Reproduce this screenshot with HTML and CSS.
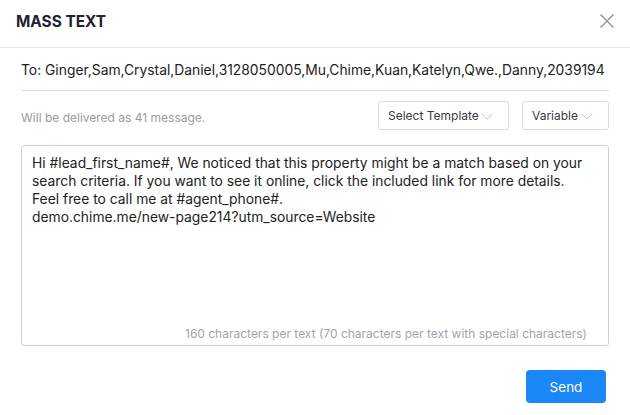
FILE: index.html
```html
<!DOCTYPE html>
<html>
<head>
<meta charset="utf-8">
<link rel="stylesheet" href="styles.css">
</head>
<body>
<div class="modal">
  <div class="header">
    <div class="title">MASS TEXT</div>
    <svg class="close" width="16" height="16" viewBox="0 0 16 16"><path d="M1.5 1.5 L14.5 14.5 M14.5 1.5 L1.5 14.5" stroke="#9a9ba6" stroke-width="1.6" fill="none"/></svg>
  </div>
  <div class="body">
    <div class="to">To: Ginger,Sam,Crystal,Daniel,3128050005,Mu,Chime,Kuan,Katelyn,Qwe.,Danny,2039194</div>
    <div class="toolbar">
      <div class="note">Will be delivered as 41 message.</div>
      <div class="select tpl">Select Template <svg width="12" height="7" viewBox="0 0 12 7"><path d="M1 1 L6 6 L11 1" stroke="#c2c3cb" stroke-width="1" fill="none"/></svg></div>
      <div class="select var">Variable <svg width="12" height="7" viewBox="0 0 12 7"><path d="M1 1 L6 6 L11 1" stroke="#c2c3cb" stroke-width="1" fill="none"/></svg></div>
    </div>
    <div class="editor">
      <div class="message">Hi #lead_first_name#, We noticed that this property might be a match based on your search criteria. If you want to see it online, click the included link for more details. Feel free to call me at #agent_phone#.<br>demo.chime.me/new-page214?utm_source=Website</div>
      <div class="hint">160 characters per text (70 characters per text with special characters)</div>
    </div>
    <div class="footer">
      <button class="send">Send</button>
    </div>
  </div>
</div>
</body>
</html>
```
FILE: styles.css
```css
html, body {
  margin: 0;
  padding: 0;
  background: #ffffff;
}
body {
  font-family: Inter, "Noto Sans", sans-serif;
  color: #202330;
}
.modal {
  width: 630px;
  height: 415px;
  background: #fff;
}
.header {
  height: 47px;
  border-bottom: 1px solid #e8e8f0;
  display: flex;
  align-items: center;
  justify-content: space-between;
  padding: 0 15px 0 16px;
}
.title {
  font-size: 15.4px;
  font-weight: 700;
  color: #202330;
  margin-top: -5px;
}
.close {
  margin-top: -5px;
}
.body {
  padding: 0 21px;
}
.to {
  font-size: 13.85px;
  color: #222;
  height: 42px;
  line-height: 44px;
  border-bottom: 1px solid #dcdce2;
  white-space: nowrap;
}
.toolbar {
  display: flex;
  align-items: center;
  margin-top: 10px;
  height: 29px;
}
.note {
  flex: 1;
  font-size: 12px;
  color: #9b9b9f;
  padding-top: 4px;
}
.select {
  height: 27px;
  border: 1px solid #d9d9e0;
  border-radius: 3px;
  display: flex;
  align-items: center;
  justify-content: space-between;
  font-size: 12px;
  color: #3a3a44;
  padding: 0 15px 0 9px;
  box-sizing: content-box;
}
.select svg { margin-top: 1px; }
.tpl {
  width: 105px;
  margin-right: 13px;
}
.var {
  width: 61px;
}
.editor {
  margin-top: 15px;
  height: 187px;
  border: 1px solid #cfcfd6;
  border-radius: 3px;
  display: flex;
  flex-direction: column;
  justify-content: space-between;
  padding: 8px 20px 4px 10px;
}
.message {
  font-size: 13.85px;
  line-height: 18px;
  color: #222;
}
.hint {
  text-align: right;
  font-size: 12px;
  color: #a3a3a8;
  margin-right: 1px;
}
.footer {
  display: flex;
  justify-content: flex-end;
  padding-top: 24px;
  padding-right: 3px;
}
.send {
  width: 80px;
  height: 33px;
  background: #1b87f6;
  color: #fff;
  border: none;
  border-radius: 4px;
  font-family: Inter, "Noto Sans", sans-serif;
  font-size: 13.5px;
}
```
